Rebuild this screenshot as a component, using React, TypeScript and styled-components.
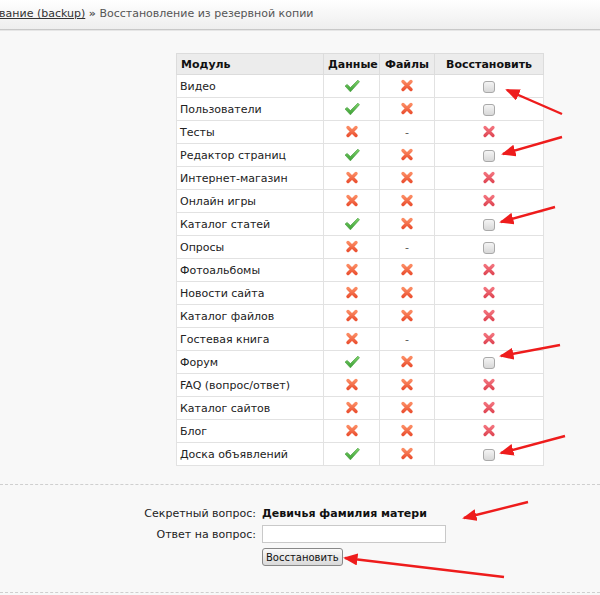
import React from "react";
import styled, { createGlobalStyle } from "styled-components";

type Mark = "ok" | "no" | "none" | "box" | "deny";

const modules: { name: string; data: Mark; files: Mark; restore: Mark }[] = [
  { name: "Видео", data: "ok", files: "no", restore: "box" },
  { name: "Пользователи", data: "ok", files: "no", restore: "box" },
  { name: "Тесты", data: "no", files: "none", restore: "deny" },
  { name: "Редактор страниц", data: "ok", files: "no", restore: "box" },
  { name: "Интернет-магазин", data: "no", files: "no", restore: "deny" },
  { name: "Онлайн игры", data: "no", files: "no", restore: "deny" },
  { name: "Каталог статей", data: "ok", files: "no", restore: "box" },
  { name: "Опросы", data: "no", files: "none", restore: "box" },
  { name: "Фотоальбомы", data: "no", files: "no", restore: "deny" },
  { name: "Новости сайта", data: "no", files: "no", restore: "deny" },
  { name: "Каталог файлов", data: "no", files: "no", restore: "deny" },
  { name: "Гостевая книга", data: "no", files: "none", restore: "deny" },
  { name: "Форум", data: "ok", files: "no", restore: "box" },
  { name: "FAQ (вопрос/ответ)", data: "no", files: "no", restore: "deny" },
  { name: "Каталог сайтов", data: "no", files: "no", restore: "deny" },
  { name: "Блог", data: "no", files: "no", restore: "deny" },
  { name: "Доска объявлений", data: "ok", files: "no", restore: "box" },
];

// red annotation arrows drawn over the screenshot
const arrows = [
  [562, 114, 507, 90],
  [562, 137, 503, 154],
  [555, 207, 501, 222],
  [560, 345, 501, 356],
  [565, 436, 501, 453],
  [528, 502, 464, 518],
  [504, 577, 345, 558],
];

function CheckIcon() {
  return (
    <svg width="16" height="14" viewBox="0 0 15 13">
      <defs>
        <linearGradient id="gok" x1="0" y1="0" x2="0" y2="1">
          <stop offset="0" stopColor="#7fd36a" />
          <stop offset="1" stopColor="#3a9e34" />
        </linearGradient>
      </defs>
      <path
        d="M1 6.5 L3 5 L6 8 L13 1 L14.5 2.5 L6 12 Z"
        fill="url(#gok)"
        stroke="#3f9a37"
        strokeWidth="0.6"
        strokeLinejoin="round"
      />
    </svg>
  );
}

function CrossIcon({ pink }: { pink?: boolean }) {
  const id = pink ? "gpink" : "gorange";
  return (
    <svg width="14" height="14" viewBox="0 0 14 14">
      <defs>
        <linearGradient id={id} x1="0" y1="0" x2="0" y2="1">
          <stop offset="0" stopColor={pink ? "#f2727c" : "#fb8a62"} />
          <stop offset="1" stopColor={pink ? "#e14a57" : "#ec5434"} />
        </linearGradient>
      </defs>
      <path
        d="M3 2.5 L11 10.5 M11 2.5 L3 10.5"
        stroke={`url(#${id})`}
        strokeWidth={pink ? 3.2 : 3.4}
        strokeLinecap="round"
        fill="none"
      />
    </svg>
  );
}

function MarkCell({ mark }: { mark: Mark }) {
  if (mark === "ok") return <CheckIcon />;
  if (mark === "no") return <CrossIcon />;
  if (mark === "deny") return <CrossIcon pink />;
  if (mark === "box") return <Box type="checkbox" />;
  return <Dash>-</Dash>;
}

export default function App() {
  return (
    <Page>
      <GlobalStyle />
      <Crumbs>
        <CrumbLink>Резервное копирование (backup)</CrumbLink> <Sep>»</Sep>{" "}
        Восстановление из резервной копии
      </Crumbs>
      <Content>
        <Table>
          <colgroup>
            <col style={{ width: 147 }} />
            <col style={{ width: 56 }} />
            <col style={{ width: 55 }} />
            <col style={{ width: 109 }} />
          </colgroup>
          <thead>
            <tr>
              <Th>Модуль</Th>
              <Th $center>Данные</Th>
              <Th $center>Файлы</Th>
              <Th $center>Восстановить</Th>
            </tr>
          </thead>
          <tbody>
            {modules.map((m) => (
              <tr key={m.name}>
                <Td>{m.name}</Td>
                <Td $center>
                  <MarkCell mark={m.data} />
                </Td>
                <Td $center>
                  <MarkCell mark={m.files} />
                </Td>
                <Td $center>
                  <MarkCell mark={m.restore} />
                </Td>
              </tr>
            ))}
          </tbody>
        </Table>
      </Content>
      <FormSection>
        <Form>
          <Label>Секретный вопрос:</Label>
          <Question>Девичья фамилия матери</Question>
          <Label>Ответ на вопрос:</Label>
          <div>
            <Answer type="text" />
          </div>
          <span />
          <div>
            <Submit type="button">Восстановить</Submit>
          </div>
        </Form>
      </FormSection>
      <Overlay width="600" height="595" viewBox="0 0 600 595">
        <defs>
          <marker
            id="head"
            markerWidth="6"
            markerHeight="5"
            refX="5.2"
            refY="2.5"
            orient="auto"
            markerUnits="strokeWidth"
          >
            <path d="M0 0 L6 2.5 L0 5 Z" fill="#ee1c1c" />
          </marker>
        </defs>
        {arrows.map(([x1, y1, x2, y2], i) => (
          <line
            key={i}
            x1={x1}
            y1={y1}
            x2={x2}
            y2={y2}
            stroke="#ee1c1c"
            strokeWidth="2.4"
            markerEnd="url(#head)"
          />
        ))}
      </Overlay>
    </Page>
  );
}

const GlobalStyle = createGlobalStyle`
  html, body {
    margin: 0;
    padding: 0;
    background: #f8f8f8;
  }
  body {
    font-family: "DejaVu Sans", Verdana, sans-serif;
    font-size: 11px;
    color: #222;
  }
`;

const Page = styled.div`
  position: relative;
  width: 600px;
  height: 595px;
  overflow: hidden;
  background: #f8f8f8;
`;

const Crumbs = styled.div`
  height: 30px;
  line-height: 28px;
  box-sizing: border-box;
  white-space: nowrap;
  text-indent: -106px;
  color: #555;
  font-size: 11px;
  background: linear-gradient(#ffffff, #eeeeee);
  border-bottom: 1px solid #c8c8c8;
  box-shadow: 0 1px 0 #e6e6e6;
`;

const CrumbLink = styled.a`
  color: #333;
  text-decoration: underline;
`;

const Sep = styled.b`
  color: #555;
`;

const Content = styled.div`
  padding: 23px 0 0 176px;
  height: 455px;
  box-sizing: border-box;
  border-bottom: 1px dashed #cfcfcf;
`;

const Table = styled.table`
  width: 368px;
  table-layout: fixed;
  border-collapse: collapse;
  background: #fff;
  border: 1px solid #dcdcdc;
`;

const Th = styled.th<{ $center?: boolean }>`
  height: 20px;
  padding: 0 4px;
  font-weight: bold;
  font-size: 11px;
  color: #111;
  text-align: ${(p) => (p.$center ? "center" : "left")};
  background: #ececec;
  border: 1px solid #dcdcdc;
  white-space: nowrap;
`;

const Td = styled.td<{ $center?: boolean }>`
  height: 22px;
  padding: 0 3px;
  font-size: 11px;
  color: #222;
  text-align: ${(p) => (p.$center ? "center" : "left")};
  vertical-align: middle;
  border: 1px solid #e2e2e2;
  white-space: nowrap;

  svg {
    vertical-align: middle;
  }
`;

const Dash = styled.span`
  color: #555;
`;

const Box = styled.input`
  appearance: none;
  margin: 0;
  width: 12px;
  height: 12px;
  vertical-align: middle;
  border: 1px solid #a9a9a9;
  border-radius: 3px;
  background: linear-gradient(#f4f4f4, #d8d8d8);
  box-sizing: border-box;
`;

const FormSection = styled.div`
  height: 108px;
  box-sizing: border-box;
  padding-top: 22px;
  border-bottom: 1px dashed #cfcfcf;
`;

const Form = styled.div`
  display: grid;
  grid-template-columns: 256px auto;
  column-gap: 6px;
  row-gap: 5px;
  align-items: center;
`;

const Label = styled.span`
  text-align: right;
  font-size: 11px;
  color: #222;
`;

const Question = styled.span`
  font-weight: bold;
  font-size: 11px;
  color: #111;
`;

const Answer = styled.input`
  width: 184px;
  height: 18px;
  box-sizing: border-box;
  margin: 0;
  border: 1px solid #c9c9c9;
  background: #fff;
`;

const Submit = styled.button`
  height: 18px;
  padding: 0 3px;
  margin: 0;
  font-family: "DejaVu Sans", Verdana, sans-serif;
  font-size: 10px;
  color: #111;
  border: 1px solid #888;
  border-radius: 3px;
  background: linear-gradient(#fafafa, #d9d9d9);
`;

const Overlay = styled.svg`
  position: absolute;
  left: 0;
  top: 0;
  pointer-events: none;
`;
